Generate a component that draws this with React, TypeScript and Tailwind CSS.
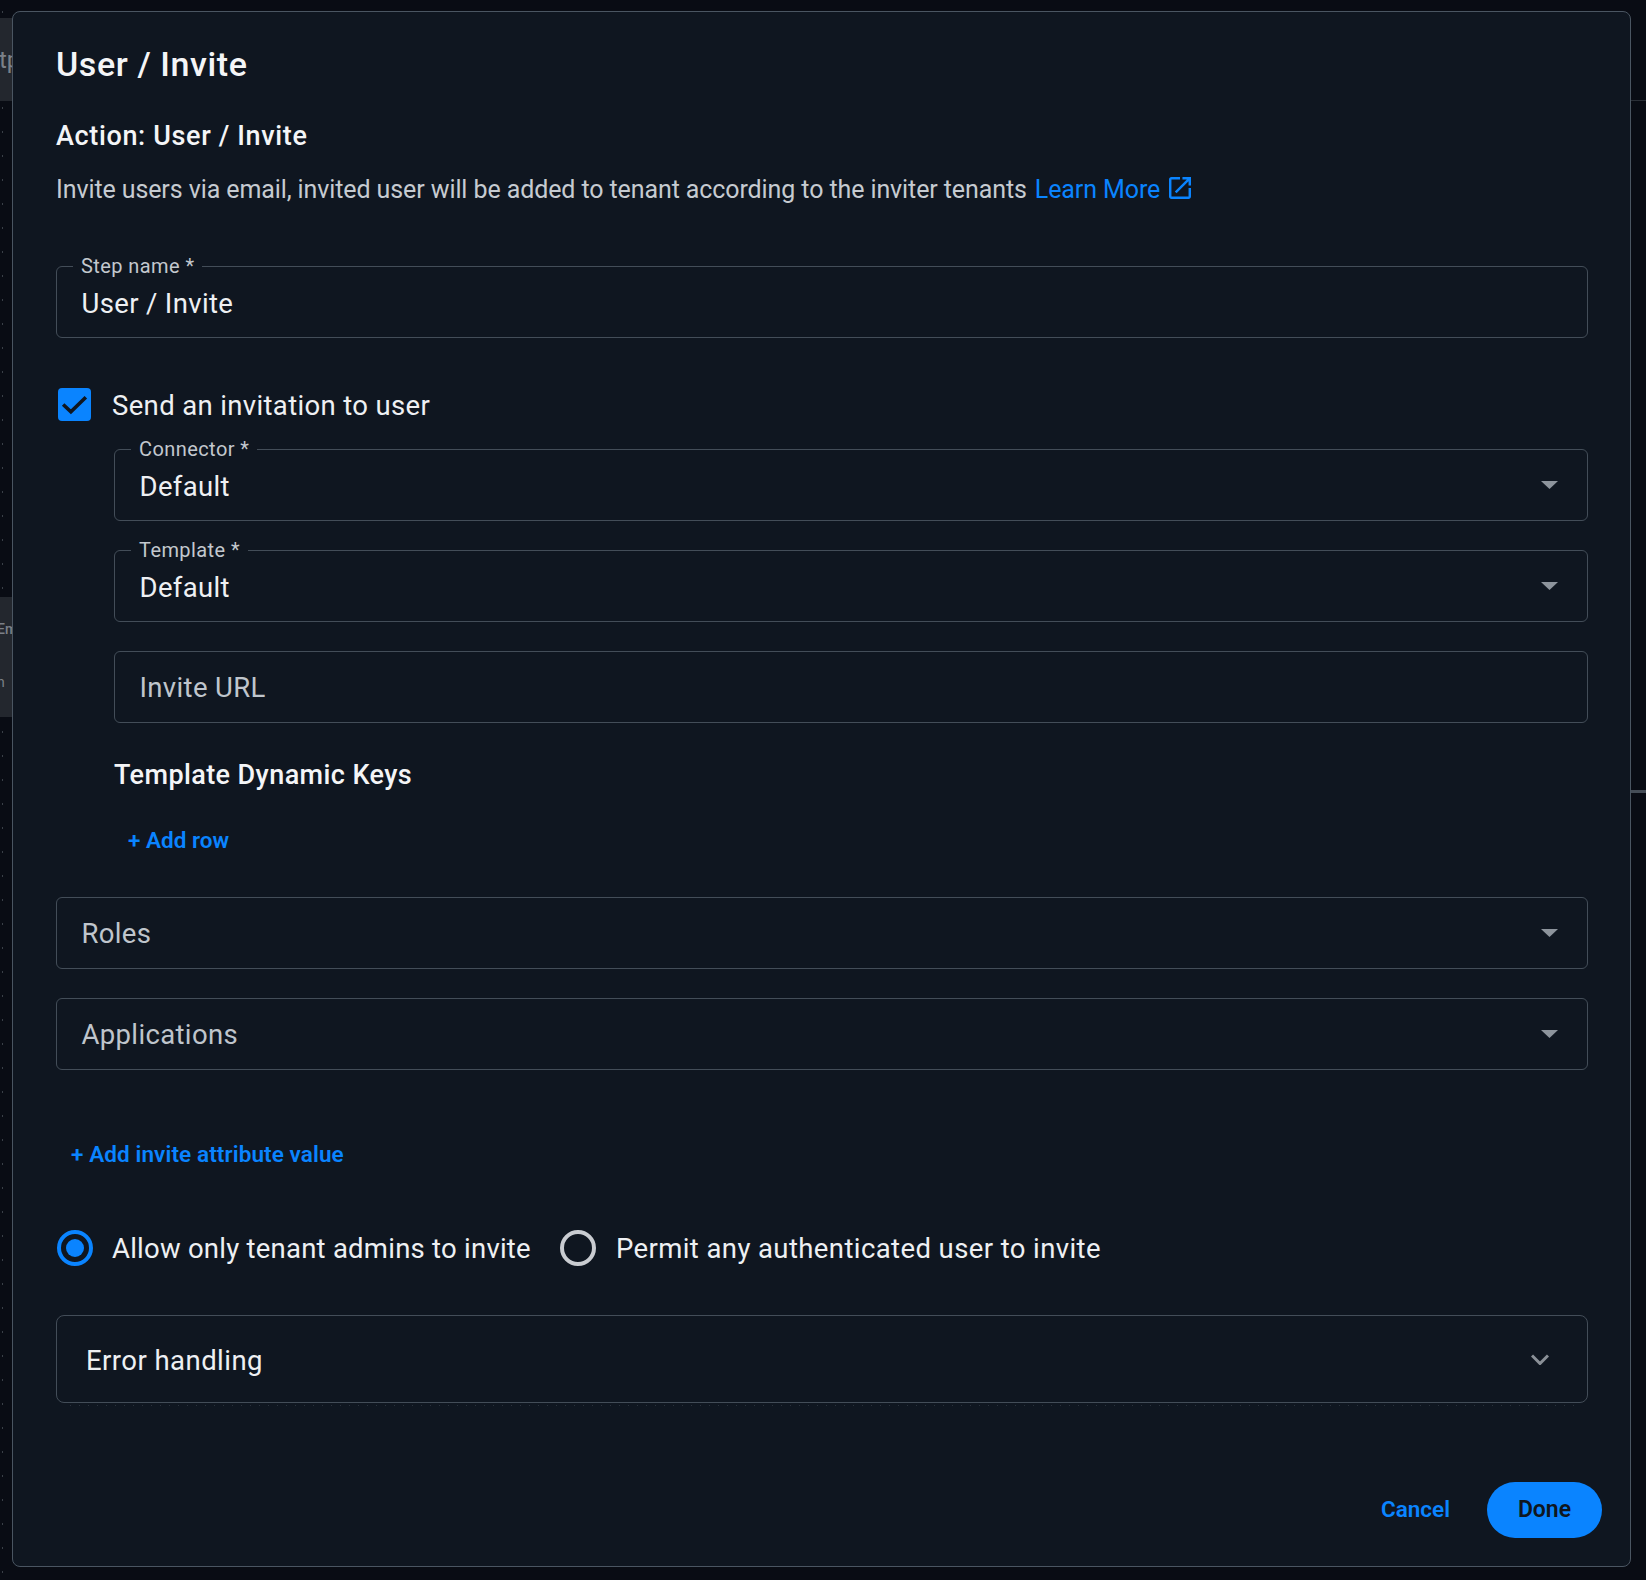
const Caret = () => (
  <svg viewBox="0 0 17 8" className="h-[8px] w-[17px] shrink-0 fill-[#8d949c]">
    <polygon points="0,0 17,0 8.5,8" />
  </svg>
);

interface FieldProps {
  label?: string;
  value: string;
  placeholder?: boolean;
  select?: boolean;
}

const Field = ({ label, value, placeholder, select }: FieldProps) => (
  <div className="relative flex h-[72px] items-center justify-between rounded-[6px] border border-[#434d58] pl-[24.5px] pr-[29px]">
    {label && (
      <span className="absolute -top-[14px] left-[16px] bg-[#0f1620] px-[8px] text-[20px] leading-[26px] tracking-[0.42px] text-[#c3c8ce]">
        {label}
      </span>
    )}
    <span className={`text-[27.5px] leading-[36px] tracking-[0.35px] ${placeholder ? "text-[#bfc5cc]" : "text-[#eef0f3]"} ${label ? "mt-[4px]" : "mt-[2px]"}`}>
      {value}
    </span>
    {select && <Caret />}
  </div>
);

const Radio = ({ checked }: { checked?: boolean }) => (
  <span
    className={`flex h-[36px] w-[36px] shrink-0 items-center justify-center rounded-full border-[4px] ${
      checked ? "border-[#0a84ff]" : "border-[#c9ccd1]"
    }`}
  >
    {checked && <span className="h-[18px] w-[18px] rounded-full bg-[#0a84ff]" />}
  </span>
);

export default function App() {
  return (
    <div className="flex h-[1580px] w-[1646px] overflow-hidden bg-[#090c14] font-['Roboto',sans-serif]">
      <div className="w-[12px] shrink-0 overflow-hidden bg-[radial-gradient(circle_at_2.5px_12px,#3a4048_0.8px,transparent_1px)] bg-[length:12px_24px] text-[24px] text-[#7b8088]">
        <div className="mt-[18px] flex h-[83px] items-center bg-[#23272e]">
          <span className="-ml-[1px]">tp</span>
        </div>
        <div className="mt-[496px] flex h-[120px] flex-col bg-[#23272e] text-[14px]">
          <span className="-ml-[3px] mt-[22px] font-medium">Em</span>
          <span className="-ml-[3px] mt-[32px]">n</span>
        </div>
      </div>

      <div className="mt-[11px] h-[1556px] w-[1619px] shrink-0 rounded-[8px] border border-[#4a5561] bg-[#0f1620] pl-[43px] pr-[42px]">
        <h1 className="mt-[30px] text-[34px] font-medium leading-[44px] tracking-[0.6px] text-[#f4f5f7]">User / Invite</h1>
        <h2 className="mt-[32px] text-[27px] font-medium leading-[36px] tracking-[0.65px] text-[#f4f5f7]">Action: User / Invite</h2>
        <p className="mt-[18px] flex items-center text-[25px] leading-[36px] tracking-[-0.1px] text-[#c6cbd1]">
          Invite users via email, invited user will be added to tenant according to the inviter tenants
          <span className="ml-[8px] text-[#0a84ff]">Learn More</span>
          <svg viewBox="3 3 18 18" className="mb-[4px] ml-[9px] h-[22px] w-[22px] fill-[#0a84ff]">
            <path d="M19 19H5V5h7V3H5c-1.11 0-2 .9-2 2v14c0 1.1.89 2 2 2h14c1.1 0 2-.9 2-2v-7h-2v7zM14 3v2h3.59l-9.83 9.83 1.41 1.41L19 6.41V10h2V3h-7z" />
          </svg>
        </p>

        <div className="mt-[58px]">
          <Field label="Step name *" value="User / Invite" />
        </div>

        <div className="mt-[48px] flex items-center pl-[2px]">
          <span className="mb-[2px] flex h-[33px] w-[33px] shrink-0 items-center justify-center rounded-[4px] bg-[#0a84ff]">
            <svg viewBox="0 0 32 32" className="h-[33px] w-[33px] fill-none stroke-[#0f1620] stroke-[3.5]">
              <path d="M5 16 12.5 23 27 9" />
            </svg>
          </span>
          <span className="ml-[21px] mt-[2px] text-[27.5px] leading-[36px] tracking-[0.35px] text-[#eef0f3]">Send an invitation to user</span>
        </div>

        <div className="ml-[58px] mt-[25px] flex flex-col gap-[29px]">
          <Field label="Connector *" value="Default" select />
          <Field label="Template *" value="Default" select />
          <Field value="Invite URL" placeholder />
        </div>

        <h3 className="ml-[58px] mt-[34px] text-[27px] font-medium leading-[36px] tracking-[0.4px] text-[#f4f5f7]">Template Dynamic Keys</h3>
        <div className="ml-[72px] mt-[32px] text-[22.5px] font-semibold leading-[30px] text-[#0a84ff]">+ Add row</div>

        <div className="mt-[42px] flex flex-col gap-[29px]">
          <Field value="Roles" placeholder select />
          <Field value="Applications" placeholder select />
        </div>

        <div className="ml-[15px] mt-[69px] text-[22.5px] font-semibold leading-[30px] tracking-[0.1px] text-[#0a84ff]">+ Add invite attribute value</div>

        <div className="mt-[60px] flex items-center pl-[1px]">
          <Radio checked />
          <span className="ml-[19px] mt-[2px] text-[27.5px] leading-[36px] tracking-[0.24px] text-[#eef0f3]">Allow only tenant admins to invite</span>
          <span className="ml-[29px]">
            <Radio />
          </span>
          <span className="ml-[20px] mt-[2px] text-[27.5px] leading-[36px] tracking-[0.4px] text-[#eef0f3]">Permit any authenticated user to invite</span>
        </div>

        <div className="mt-[48px] flex h-[88px] items-center justify-between rounded-[8px] border border-[#434d58] pl-[29px] pr-[38px]">
          <span className="mt-[3px] text-[27.5px] leading-[36px] tracking-[0.45px] text-[#eef0f3]">Error handling</span>
          <svg viewBox="0 0 18 11" className="h-[11px] w-[18px] fill-none stroke-[#8a9097] stroke-[3]">
            <path d="M1 1.5 9 9.5 17 1.5" />
          </svg>
        </div>
        <div className="ml-[14px] mr-[14px] mt-[2px] h-[1px] bg-[repeating-linear-gradient(90deg,#2a323c_0_1px,transparent_1px_9px)]" />

        <div className="mt-[76px] flex items-center justify-end gap-[37px]">
          <span className="text-[22.5px] font-semibold text-[#0a84ff]">Cancel</span>
          <span className="-mr-[14px] flex h-[56px] w-[115px] items-center justify-center rounded-full bg-[#0a84ff] text-[23px] font-semibold text-[#0f1620]">
            Done
          </span>
        </div>
      </div>

      <div className="flex-1">
        <div className="mt-[100px] h-[1px] bg-[#2a2f37]" />
        <div className="mt-[689px] h-[3px] bg-[#454d57]" />
      </div>
    </div>
  );
}
